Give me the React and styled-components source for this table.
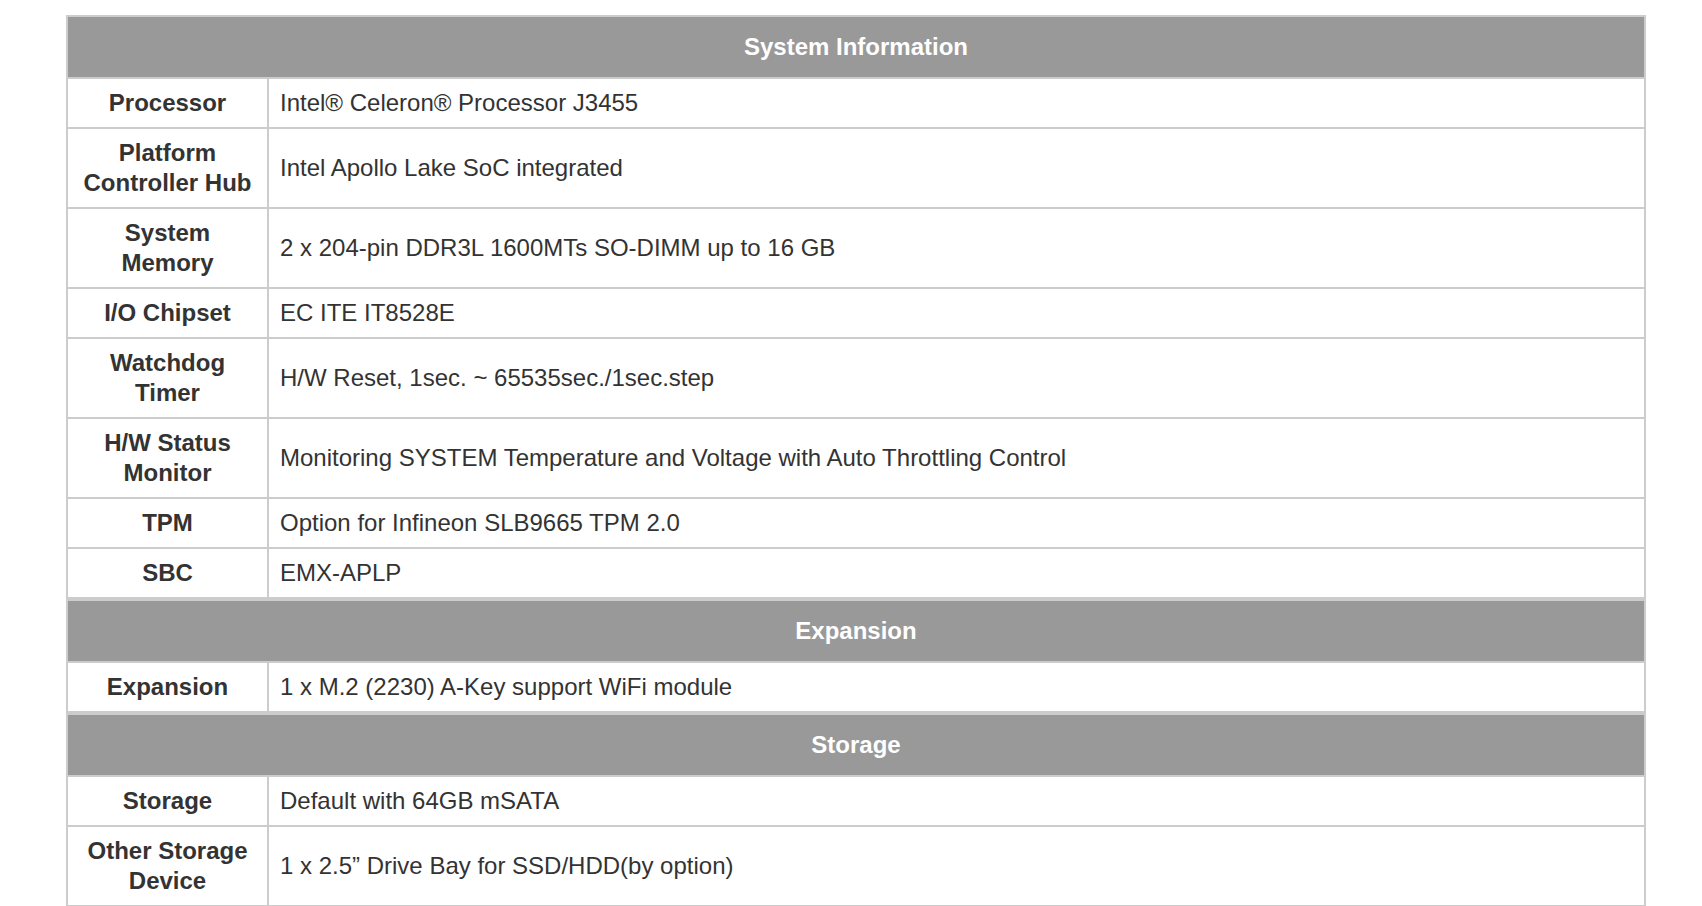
import React from "react"
import styled, { createGlobalStyle } from "styled-components"

const GlobalStyle = createGlobalStyle`
  body {
    margin: 0;
    background: #fff;
    font-family: "Liberation Sans", Arial, Helvetica, sans-serif;
  }
`

const Page = styled.div`
  padding: 15px 0 40px 66px;
`

const Table = styled.table`
  width: 1580px;
  border-collapse: collapse;
  table-layout: fixed;
  border: 2px solid #ccc;
  font-size: 24px;
  line-height: 30px;
  color: #333;
`

const LabelCol = styled.col`
  width: 201px;
`

const SectionHeader = styled.th`
  background: #999;
  color: #fff;
  font-weight: bold;
  text-align: center;
  padding: 15px 10px;
  border: 2px solid #ccc;
  border-top-width: ${({ $first }) => ($first ? "2px" : "4px")};
`

const Label = styled.th`
  padding: 9px 4px;
  font-weight: bold;
  text-align: center;
  vertical-align: middle;
  border: 2px solid #ccc;
`

const Value = styled.td`
  padding: 9px 11px;
  text-align: left;
  vertical-align: middle;
  border: 2px solid #ccc;
`

const sections = [
  {
    title: "System Information",
    rows: [
      ["Processor", "Intel® Celeron® Processor J3455"],
      ["Platform Controller Hub", "Intel Apollo Lake SoC integrated"],
      ["System Memory", "2 x 204-pin DDR3L 1600MTs SO-DIMM up to 16 GB"],
      ["I/O Chipset", "EC ITE IT8528E"],
      ["Watchdog Timer", "H/W Reset, 1sec. ~ 65535sec./1sec.step"],
      [
        "H/W Status Monitor",
        "Monitoring SYSTEM Temperature and Voltage with Auto Throttling Control",
      ],
      ["TPM", "Option for Infineon SLB9665 TPM 2.0"],
      ["SBC", "EMX-APLP"],
    ],
  },
  {
    title: "Expansion",
    rows: [["Expansion", "1 x M.2 (2230) A-Key support WiFi module"]],
  },
  {
    title: "Storage",
    rows: [
      ["Storage", "Default with 64GB mSATA"],
      ["Other Storage Device", "1 x 2.5” Drive Bay for SSD/HDD(by option)"],
    ],
  },
]

const labelLines = {
  "Platform Controller Hub": ["Platform", "Controller Hub"],
  "System Memory": ["System", "Memory"],
  "Watchdog Timer": ["Watchdog", "Timer"],
  "H/W Status Monitor": ["H/W Status", "Monitor"],
  "Other Storage Device": ["Other Storage", "Device"],
}

const LabelText = ({ text }) => {
  const lines = labelLines[text]
  if (!lines) return text
  return (
    <>
      {lines[0]}
      <br />
      {lines[1]}
    </>
  )
}

const App = () => {
  return (
    <Page>
      <GlobalStyle />
      <Table>
        <colgroup>
          <LabelCol />
          <col />
        </colgroup>
        <tbody>
          {sections.map((section, i) => (
            <React.Fragment key={section.title}>
              <tr>
                <SectionHeader colSpan={2} $first={i === 0}>
                  {section.title}
                </SectionHeader>
              </tr>
              {section.rows.map(([label, value]) => (
                <tr key={label}>
                  <Label>
                    <LabelText text={label} />
                  </Label>
                  <Value>{value}</Value>
                </tr>
              ))}
            </React.Fragment>
          ))}
        </tbody>
      </Table>
    </Page>
  )
}

export default App
